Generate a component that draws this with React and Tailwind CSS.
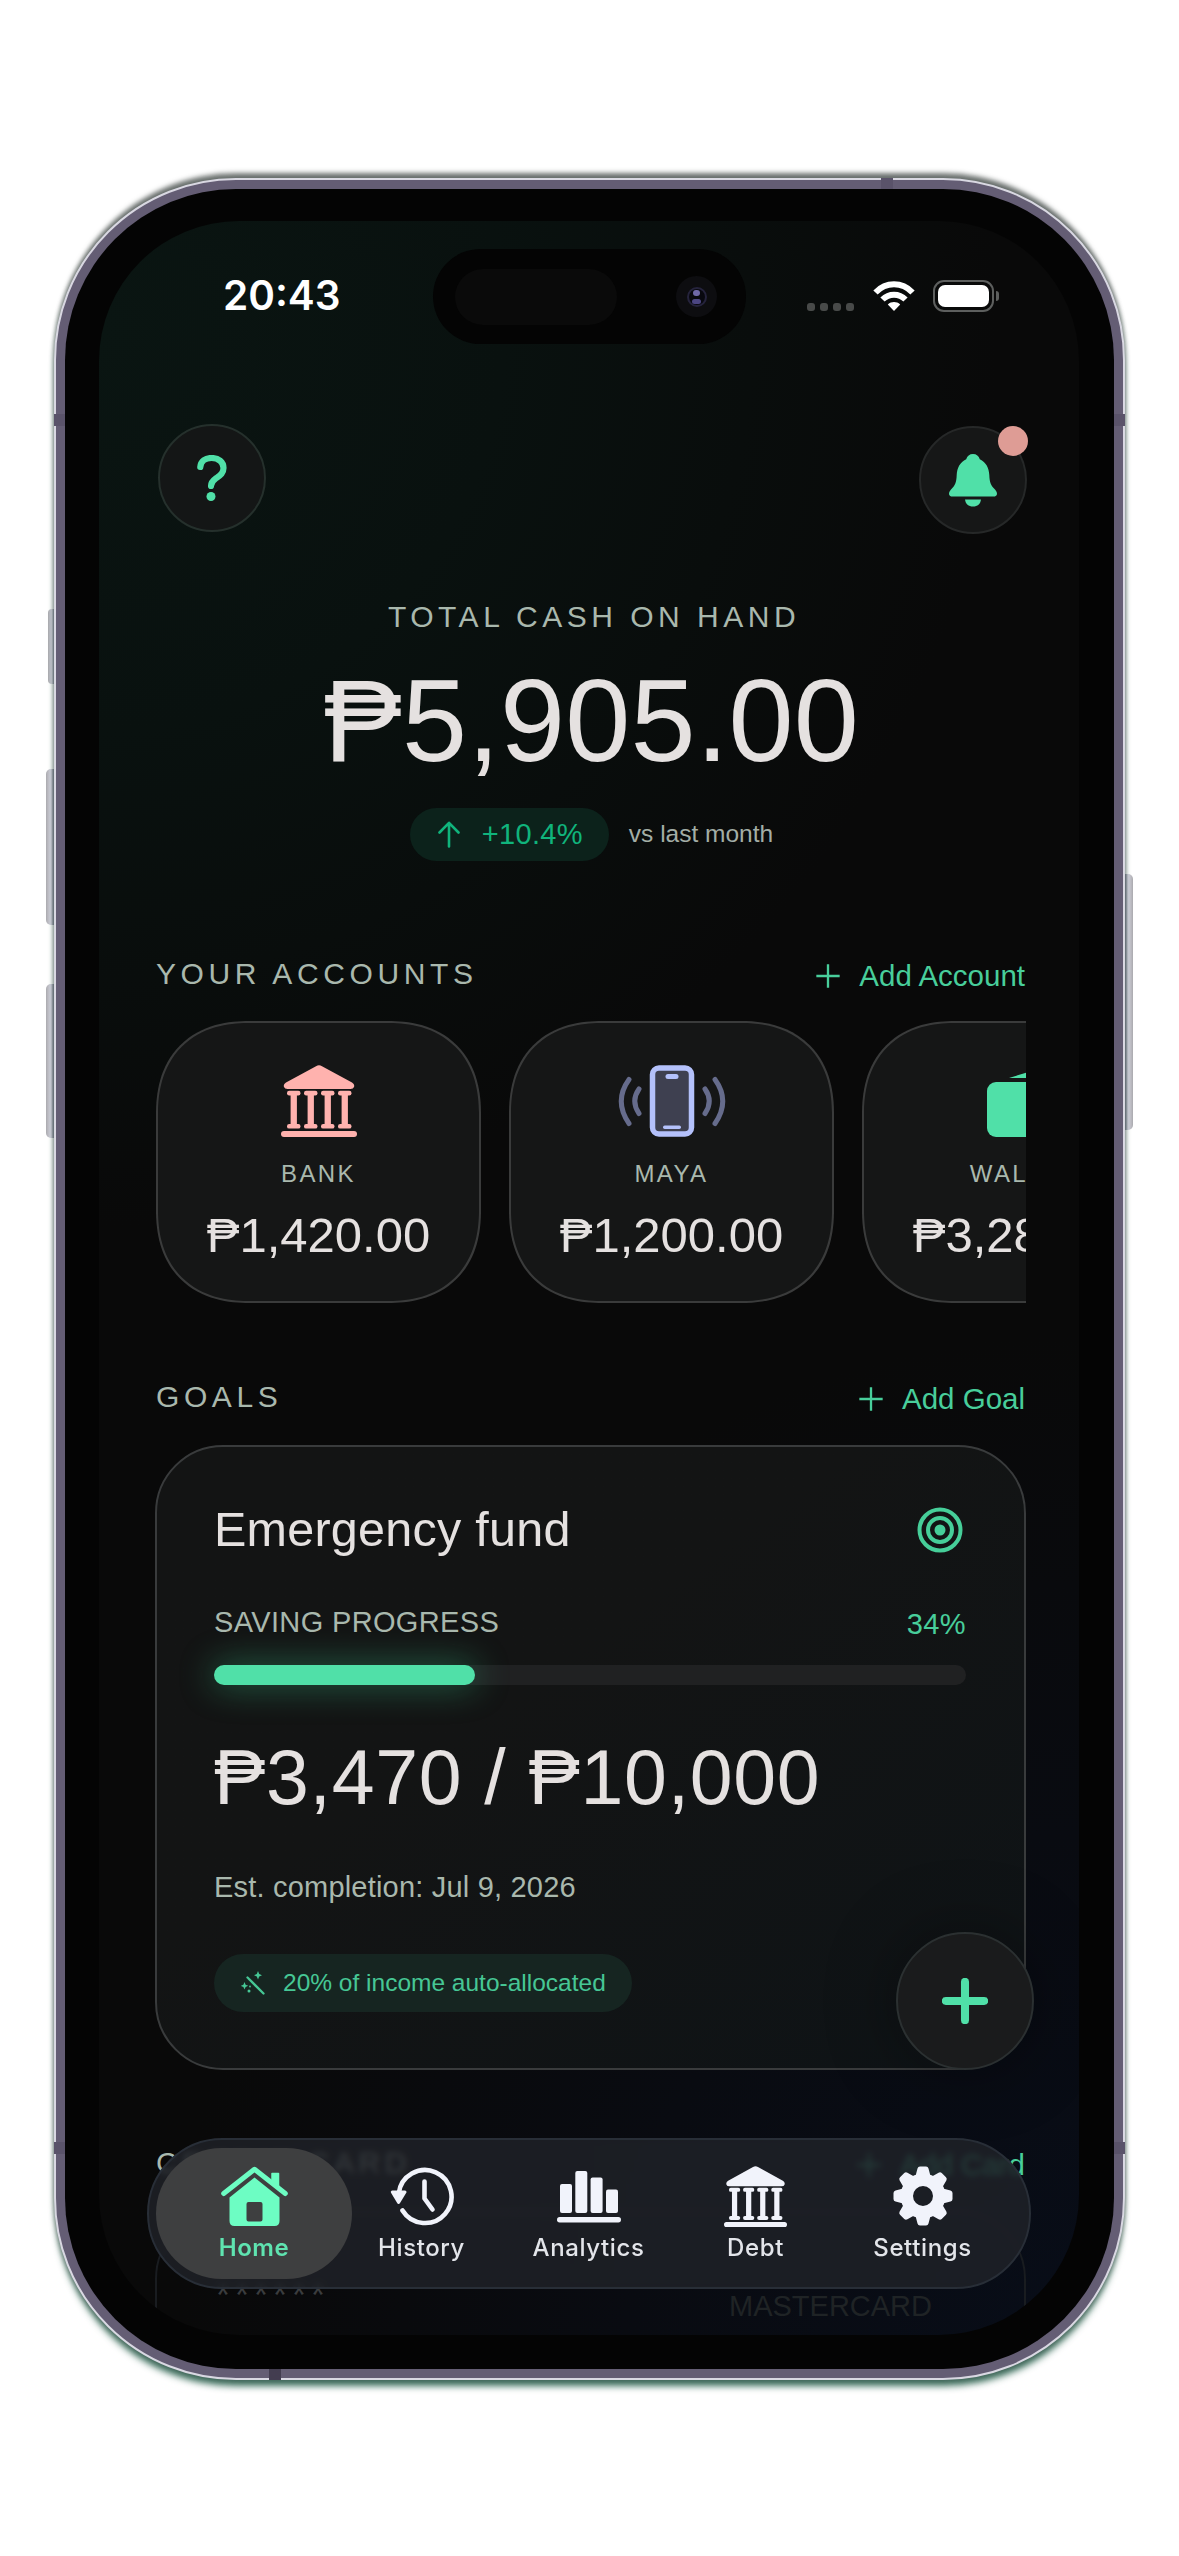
import React from "react";

const SANS = "font-['Liberation_Sans',Arial,sans-serif]";

function BankIcon({ className }) {
  return (
    <svg viewBox="0 0 76 72" className={className} fill="currentColor" preserveAspectRatio="none">
      <path d="M35 1.2Q38 -.6 41 1.2L71 17.5Q74 19.5 73 22Q72.300 24 69.500 24H6.500Q3.700 24 3 22Q2 19.500 5 17.500Z" />
      {[6, 23, 40, 57].map((x) => (
        <g key={x}>
          <rect x={x} y="25.800" width="13.500" height="4.600" rx="2.200" />
          <rect x={x + 3.6} y="28" width="6.300" height="34" />
          <rect x={x} y="59" width="13.500" height="4.600" rx="2.200" />
        </g>
      ))}
      <rect x="0" y="66" width="76" height="6" rx="3" />
    </svg>
  );
}

function MayaIcon() {
  return (
    <svg viewBox="0 0 110 72" className="h-[72px] w-[110px]" fill="none">
      <rect x="35.500" y="3" width="39" height="66" rx="6.500" fill="#3e4050" stroke="#b4c1fb" strokeWidth="5.500" />
      <rect x="48.500" y="9" width="13" height="5" rx="2.500" fill="#b4c1fb" />
      <rect x="46" y="60.500" width="18" height="3.500" rx="1.700" fill="#b4c1fb" />
      <g stroke="#666c8c" strokeWidth="5" strokeLinecap="round">
        <path d="M12 14.500Q-3.500 36 12 58.500" />
        <path d="M22 24Q13.500 36 22 48.500" />
        <path d="M98 14.500Q113.500 36 98 58.500" />
        <path d="M88 24Q96.500 36 88 48.500" />
      </g>
    </svg>
  );
}

function WalletIcon() {
  return (
    <svg viewBox="0 0 76 72" className="h-[72px] w-[76px]" fill="#50e0a8">
      <path d="M22 13L56 2.500Q61 1.500 62 6V13Z" />
      <rect x="0" y="17" width="76" height="55" rx="9" />
    </svg>
  );
}

function BellIcon() {
  return (
    <svg viewBox="0 0 48 53" className="h-[53px] w-[48px]" fill="#50e0a8">
      <path d="M24 0C27.500 0 29.800 2 30.800 5.200C37 8 40 14 40.300 21C40.600 29 42 31.500 46 35.500C49.500 39.500 48 42.500 44.500 42.500H3.500C0 42.500 -1.500 39.500 2 35.500C6 31.500 7.400 29 7.700 21C8 14 11 8 17.200 5.200C18.200 2 20.500 0 24 0Z" />
      <path d="M16 45.500H32C31.500 50 28.500 52.500 24 52.500S16.500 50 16 45.500Z" />
    </svg>
  );
}

function WifiIcon() {
  return (
    <svg viewBox="0 0 42 30" className="h-[30px] w-[42px]" fill="none" stroke="#fff" strokeWidth="6">
      <path d="M2.500 11.500C13 .6 29 .6 39.500 11.500" />
      <path d="M9.500 18.500C16 12 26 12 32.500 18.500" />
      <path d="M21 30L14.800 23.500C18.500 20.300 23.500 20.300 27.200 23.500Z" fill="#fff" stroke="none" />
    </svg>
  );
}

function HomeIcon() {
  return (
    <svg viewBox="0 0 67 60" className="h-[60px] w-[67px]" fill="currentColor">
      <path d="M51 7.500H57.500V22L51 16Z" stroke="currentColor" strokeWidth="1.500" strokeLinejoin="round" />
      <path d="M2.700 27.500L33.500 3.200L64.300 27.500" fill="none" stroke="currentColor" strokeWidth="5" strokeLinecap="round" strokeLinejoin="round" />
      <path fillRule="evenodd" d="M33.500 11.500L58.500 31.500V55Q58.500 60 53.500 60H13.500Q8.500 60 8.500 55V31.500ZM27.500 36Q25.500 36 25.500 38V53.500Q25.500 55.500 27.500 55.500H39.500Q41.500 55.500 41.500 53.500V38Q41.500 36 39.500 36Z" />
    </svg>
  );
}

function HistoryIcon() {
  return (
    <svg viewBox="0 0 64 60" className="h-[60px] w-[64px]" fill="none" stroke="currentColor" strokeWidth="4.600" strokeLinecap="round" strokeLinejoin="round">
      <path d="M8.700 27.500A26.500 26.500 0 1 1 12.500 44.500" />
      <path d="M34.500 15.500V32.500L42.500 43.500" />
      <path d="M2.300 26H15L8.600 36.500Z" fill="currentColor" strokeWidth="3" />
    </svg>
  );
}

function AnalyticsIcon() {
  return (
    <svg viewBox="0 0 64 60" className="h-[60px] w-[64px]" fill="currentColor">
      <rect x="3" y="18" width="12" height="29" rx="2" />
      <rect x="18.300" y="5" width="12" height="42" rx="2" />
      <rect x="33.600" y="11.500" width="12" height="35.500" rx="2" />
      <rect x="49" y="23.500" width="12" height="23.500" rx="2" />
      <rect x="0" y="51" width="64" height="5.500" rx="2.700" />
    </svg>
  );
}

function GearIcon() {
  return (
    <svg viewBox="-30 -30 60 60" className="h-[60px] w-[60px]" fill="currentColor">
      {[0, 45, 90, 135, 180, 225, 270, 315].map((a) => (
        <path key={a} transform={`rotate(${a})`} d="M-8 -18L-5.500 -27.500Q-5 -29.500 -3 -29.500H3Q5 -29.500 5.500 -27.500L8 -18Z" />
      ))}
      <path fillRule="evenodd" d="M0 -22.500A22.500 22.500 0 1 1 0 22.500A22.500 22.500 0 1 1 0 -22.500ZM0 -10A10 10 0 1 0 0 10A10 10 0 1 0 0 -10Z" />
    </svg>
  );
}

function WandIcon() {
  return (
    <svg viewBox="0 0 24 24" className="h-6 w-6" fill="#46c795">
      <path d="M6.500 6.500L22.500 22.500" stroke="#46c795" strokeWidth="2.300" strokeLinecap="round" />
      <path d="M17 0L18.200 3L21 4.200L18.200 5.400L17 8.400L15.800 5.400L13 4.200L15.800 3Z" />
      <path d="M3.500 11L4.600 13.700L7.200 14.800L4.600 15.900L3.500 18.600L2.400 15.900L-.2 14.800L2.400 13.700Z" />
      <circle cx="8" cy="20" r="1.500" />
      <circle cx="9" cy="15.500" r=".9" />
    </svg>
  );
}

function PlusIcon({ className, width, cap }) {
  return (
    <svg viewBox="0 0 24 24" className={className} fill="none" stroke="currentColor" strokeWidth={width} strokeLinecap={cap}>
      <path d="M12 2V22M2 12H22" />
    </svg>
  );
}

function SectionHead({ title, action }) {
  return (
    <div className="flex h-[30px] items-start justify-between">
      <h2 className="text-[30px] leading-none tracking-[4.600px] whitespace-nowrap text-[#a9b8ad]">{title}</h2>
      <div className="flex items-center gap-[17px] pt-[2px] pr-px text-[#48ce9b]">
        <PlusIcon className="h-7 w-7" width={2} cap="butt" />
        <span className="text-[29.500px] leading-none whitespace-nowrap">{action}</span>
      </div>
    </div>
  );
}

function AccountCard({ icon, name, amount }) {
  return (
    <div className="flex h-[282px] w-[325px] shrink-0 flex-col items-center rounded-[93px] border-2 border-[#3a3b3b] bg-[#151616] pt-[42px] [corner-shape:superellipse(1.2)]">
      {icon}
      <span className="mt-[25px] text-[24px] leading-none tracking-[2.400px] text-[#a9b8ad]">{name}</span>
      <span className="mt-[25px] text-[49px] leading-none whitespace-nowrap text-[#e5e1e0]">{amount}</span>
    </div>
  );
}

function NavItem({ icon, label, active }) {
  return (
    <div
      className={
        active
          ? "flex h-[131px] w-[196px] flex-col items-center rounded-full bg-[#3e3f40] pt-[18px] text-[#6dfdc3]"
          : "flex h-[131px] w-[167px] flex-col items-center pt-[18px] text-[#f1f3fb]"
      }
    >
      <div className="flex h-[62px] items-start justify-center">{icon}</div>
      <span
        className={
          active
            ? "mt-[8px] text-[24px] leading-none font-semibold tracking-[0.500px] text-[#5fe3b0]"
            : "mt-[8px] text-[24px] leading-none font-medium tracking-[0.600px] text-[#e3e5ea]"
        }
      >
        {label}
      </span>
    </div>
  );
}

function SideButton({ className }) {
  return <div className={`absolute bg-linear-to-r from-[#a9a9ad] via-[#dcdae6] to-[#58536b] ${className}`} />;
}

export default function App() {
  return (
    <div className={`h-[2556px] w-[1179px] overflow-hidden bg-white pt-[178px] pl-[54px] ${SANS}`}>
      <div className="relative h-[2202px] w-[1071px]">
        <SideButton className="top-[431px] left-[-6px] h-[75px] w-[8px] rounded-l-[4px]" />
        <SideButton className="top-[591px] left-[-8px] h-[156px] w-[10px] rounded-l-[5px]" />
        <SideButton className="top-[806px] left-[-8px] h-[154px] w-[10px] rounded-l-[5px]" />
        <SideButton className="top-[696px] right-[-8px] h-[256px] w-[10px] rotate-180 rounded-l-[5px]" />

        {/* Metal frame */}
        <div className="relative h-[2202px] w-[1071px] rounded-[182px] border-2 border-[#d9d8e2] bg-[#645d74] p-[9px] shadow-[0_0_4px_1px_rgba(80,90,86,0.45),0_-7px_5px_-2px_rgba(70,76,73,0.75),0_8px_7px_-2px_rgba(24,84,62,0.85)]">
          <div className="absolute top-[234px] -left-[2px] h-[12px] w-[11px] bg-[#5a536a]" />
          <div className="absolute top-[234px] -right-[2px] h-[12px] w-[11px] bg-[#5a536a]" />
          <div className="absolute top-[1962px] -left-[2px] h-[12px] w-[11px] bg-[#5a536a]" />
          <div className="absolute top-[1962px] -right-[2px] h-[12px] w-[11px] bg-[#5a536a]" />
          <div className="absolute -top-[2px] left-[825px] h-[11px] w-[12px] bg-[#5a536a]" />
          <div className="absolute -bottom-[2px] left-[213px] h-[11px] w-[12px] bg-[#433d50]" />

          {/* Bezel */}
          <div className="h-[2180px] w-[1049px] rounded-[171px] bg-[#040404] pt-[32px] pl-[34px]">
            {/* Display */}
            <div className="relative h-[2114px] w-[980px] overflow-hidden rounded-[140px] bg-[#090909] bg-[radial-gradient(ellipse_900px_900px_at_0%_5%,#0a1512_0%,#09110f_45%,transparent_100%),radial-gradient(ellipse_900px_1000px_at_100%_100%,#080d18_0%,#090b11_50%,transparent_100%)]">
              <div className="mt-[28px] flex h-[95px] items-center">
                <span className="w-[334px] pb-px pl-[124px] font-['Inter',sans-serif] text-[40.500px] leading-none font-semibold text-white">20:43</span>
                <div className="flex h-[95px] w-[313px] items-center justify-between rounded-full bg-[#040404] pr-[29px] pl-[22px]">
                  <div className="h-[56px] w-[162px] rounded-full bg-[#0a0a0a]" />
                  <div className="flex h-[41px] w-[41px] items-center justify-center rounded-full bg-[#0d0d10]">
                    <div className="flex h-[20px] w-[20px] flex-col items-center justify-between rounded-full border-2 border-[#25233c] bg-[#08080f] py-px">
                      <div className="h-[6px] w-[7px] rounded-full bg-[#6f68a8]" />
                      <div className="h-[5px] w-[9px] rounded-full bg-[#4b4582]" />
                    </div>
                  </div>
                </div>
                <div className="flex items-center pb-px pl-[61px]">
                  <div className="flex gap-[5px] pt-[22px]">
                    {[0, 1, 2, 3].map((d) => (
                      <div key={d} className="h-[8px] w-[8px] rounded-[3px] bg-[#484a49]" />
                    ))}
                  </div>
                  <div className="ml-[19px]">
                    <WifiIcon />
                  </div>
                  <div className="ml-[18px] h-[32px] w-[61px] rounded-[11px] border-2 border-[#5d5f5e] p-[3px]">
                    <div className="h-[22px] w-[51px] rounded-[7px] bg-white" />
                  </div>
                  <div className="ml-[2px] h-[10px] w-[3px] rounded-r-full bg-[#5d5f5e]" />
                </div>
              </div>

              <div className="mt-[80px] flex justify-between pr-[52px] pl-[59px]">
                <div className="flex h-[108px] w-[108px] items-center justify-center rounded-full border-2 border-[#25302c] bg-[#141616]">
                  <svg viewBox="0 0 30 46" className="h-[46px] w-[30px]" fill="none">
                    <path d="M3.300 12C3.800 6 8.500 3 14.500 3C21.500 3 26.500 7 26.500 13C26.500 18.500 23 20.500 19 23.300C15.500 25.800 14 27.500 14 31" stroke="#50e0a8" strokeWidth="6.200" strokeLinecap="round" />
                    <circle cx="14" cy="41.500" r="4.500" fill="#50e0a8" />
                  </svg>
                </div>
                <div className="relative mt-[2px] flex h-[108px] w-[108px] items-center justify-center rounded-full border-2 border-[#262828] bg-[#161717]">
                  <BellIcon />
                  <div className="absolute -top-[2px] -right-[3px] h-[30px] w-[30px] rounded-full bg-[#de9c95]" />
                </div>
              </div>

              <div className="mt-[68px] flex flex-col items-center pl-[5px]">
                <span className="pl-[5px] text-[30px] leading-none tracking-[4.500px] text-[#a9b8ad]">TOTAL CASH ON HAND</span>
                <span className="mt-[30px] text-[117px] leading-none tracking-[0.200px] whitespace-nowrap text-[#e5e1e0]">₱5,905.00</span>
                <div className="mt-[29px] flex h-[53px] items-center gap-[20px]">
                  <div className="flex h-[53px] w-[199px] items-center rounded-full bg-[#0c221b] pl-[28px]">
                    <svg viewBox="0 0 22 27" className="h-[27px] w-[22px]" fill="none" stroke="#10b47c" strokeWidth="2.600" strokeLinecap="round" strokeLinejoin="round">
                      <path d="M11 25.500V2M1.500 11.500L11 1.800L20.500 11.500" />
                    </svg>
                    <span className="ml-[22px] text-[29px] leading-none tracking-[0.300px] text-[#10b47c]">+10.4%</span>
                  </div>
                  <span className="text-[24.500px] leading-none text-[#a3aea6]">vs last month</span>
                </div>
              </div>

              <div className="pr-[53px] pl-[57px]">
                <div className="mt-[98px]">
                  <SectionHead title="YOUR ACCOUNTS" action="Add Account" />
                </div>
                <div className="mt-[32px] flex gap-[28px] overflow-hidden">
                  <AccountCard icon={<BankIcon className="h-[72px] w-[76px] text-[#ffb2ae]" />} name="BANK" amount="₱1,420.00" />
                  <AccountCard icon={<MayaIcon />} name="MAYA" amount="₱1,200.00" />
                  <AccountCard icon={<WalletIcon />} name="WALLET" amount="₱3,285.00" />
                </div>

                <div className="mt-[79px]">
                  <SectionHead title="GOALS" action="Add Goal" />
                </div>
                <div className="-ml-px mt-[33px] h-[625px] rounded-[68px] border-2 border-[#393b3c] bg-linear-to-br from-[#131414] from-40% to-[#0e1316] pt-[58px] pr-[58px] pl-[57px]">
                  <div className="flex h-[49px] items-start justify-between">
                    <span className="text-[48.500px] leading-none tracking-[0.250px] whitespace-nowrap text-[#e5e1e0]">Emergency fund</span>
                    <svg viewBox="0 0 46 46" className="mt-[2px] mr-[3px] h-[46px] w-[46px]" fill="none" stroke="#46ce99" strokeWidth="4">
                      <circle cx="23" cy="23" r="20.500" />
                      <circle cx="23" cy="23" r="12" />
                      <circle cx="23" cy="23" r="5.500" fill="#46ce99" stroke="none" />
                    </svg>
                  </div>
                  <div className="mt-[54px] flex justify-between text-[29px] leading-none">
                    <span className="tracking-[0.350px] text-[#a9b8ad]">SAVING PROGRESS</span>
                    <span className="pt-[2px] tracking-[0.400px] text-[#48ce9b]">34%</span>
                  </div>
                  <div className="mt-[26px] h-[20px] rounded-full bg-[#202122]">
                    <div className="h-[20px] w-[261px] rounded-full bg-[#50e0a8] shadow-[0_0_34px_2px_rgba(60,200,140,0.42)]" />
                  </div>
                  <div className="mt-[54px] text-[77px] leading-none tracking-[0.700px] whitespace-nowrap text-[#e5e1e0]">₱3,470 / ₱10,000</div>
                  <div className="mt-[57px] text-[29px] leading-none tracking-[0.200px] text-[#a9b8ad]">Est. completion: Jul 9, 2026</div>
                  <div className="mt-[52px] flex h-[58px] w-[418px] items-center rounded-full bg-[#162521] pl-[27px]">
                    <WandIcon />
                    <span className="ml-[18px] text-[24.500px] leading-none whitespace-nowrap text-[#46c795]">20% of income auto-allocated</span>
                  </div>
                </div>

                <div className="mt-[78px]">
                  <SectionHead title="CREDIT CARD" action="Add Card" />
                </div>
                <div className="-ml-px mt-[33px] flex h-[400px] items-start justify-between rounded-[68px] border-2 border-[#191c20] pt-[58px] pr-[92px] pl-[59px]">
                  <span className="pt-[7px] text-[36px] leading-none tracking-[5px] text-[#3a3c3e]">******</span>
                  <span className="pt-[21px] text-[29px] leading-none text-[#1f2325]">MASTERCARD</span>
                </div>
              </div>

              <button className="absolute top-[1711px] left-[797px] flex h-[138px] w-[138px] items-center justify-center rounded-full border-2 border-[#2b3031] bg-[#1a1b1c] text-[#50e0a8] shadow-[0_0_70px_rgba(0,0,0,0.35)]">
                <PlusIcon className="h-[46px] w-[46px]" width={4.2} cap="round" />
              </button>

              <nav className="absolute top-[1917px] left-[48px] flex h-[151px] w-[884px] items-center rounded-full border-2 border-[#282e37] bg-[#202228]/82 pl-[7px] font-['Inter',sans-serif] backdrop-blur-[3px]">
                <NavItem icon={<HomeIcon />} label="Home" active />
                <div className="-ml-[14px] flex">
                  <NavItem icon={<HistoryIcon />} label="History" />
                  <NavItem icon={<AnalyticsIcon />} label="Analytics" />
                  <NavItem icon={<BankIcon className="h-[61px] w-[63px]" />} label="Debt" />
                  <NavItem icon={<GearIcon />} label="Settings" />
                </div>
              </nav>
            </div>
          </div>
        </div>
      </div>
    </div>
  );
}
